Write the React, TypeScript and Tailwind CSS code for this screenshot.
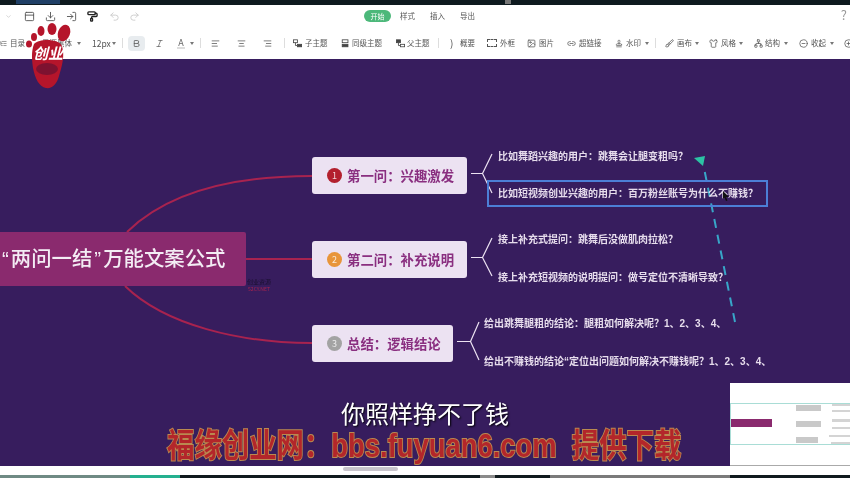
import React from "react";
import {
  AlignLeft, AlignCenter, AlignRight, Undo2, Redo2, Download, LogIn, Image as ImageIcon, Link2, Shirt, CircleMinus, CirclePlus, Network, Bold, Italic, ListTree, PaintRoller, PanelTop, ChevronDown, Stamp, Brush
} from "lucide-react";

const Caret = ({ ml = "ml-[4px]" }: { ml?: string }) => <span className={`h-0 w-0 shrink-0 border-x-[2px] border-t-[3px] border-x-transparent border-t-[#777] ${ml}`} />;
const Divider = ({ ml }: { ml: string }) => <span className={`h-[10px] w-px shrink-0 bg-[#ddd] ${ml}`} />;

const TopicIcon = ({ kind }: { kind: number }) => (
  <svg className="shrink-0" width="9" height="9" viewBox="0 0 11 10" fill="none" stroke="#444" strokeWidth="1">
    {kind === 0 && <><rect x="0.5" y="0.5" width="5" height="3.5" /><path d="M3 4v3.5h2" /><rect x="5.5" y="6" width="5" height="3" fill="#444" /></>}
    {kind === 1 && <><rect x="1.5" y="0.5" width="7" height="3.5" /><rect x="1.5" y="6" width="7" height="3" fill="#444" /></>}
    {kind === 2 && <><rect x="0.5" y="0.5" width="5" height="3.5" fill="#444" /><path d="M3 4v3.5h2" /><rect x="5.5" y="6" width="5" height="3" /></>}
  </svg>
);

const Label = ({ ml = "ml-[3px]", children }: { ml?: string; children: React.ReactNode }) => (
  <span className={`shrink-0 whitespace-nowrap text-[7.5px] leading-none text-[#555] ${ml}`}>{children}</span>
);

const icon9 = "h-[9px] w-[9px] shrink-0 text-[#555]";

const Leaf = ({ x, y, children }: { x: string; y: string; children: React.ReactNode }) => (
  <div className={`absolute whitespace-nowrap text-[10px] font-semibold leading-none text-[#e6dcec] [font-family:'Liberation_Sans','Noto_Sans_CJK_SC',sans-serif] ${x} ${y}`}>{children}</div>
);

const Topic = ({ pos, color, n, children }: { pos: string; color: string; n: number; children: React.ReactNode }) => (
  <div className={`absolute flex h-[37px] items-center rounded-[3px] bg-[#ece2f2] pl-[15px] ${pos}`}>
    <span className={`flex h-[15px] w-[15px] items-center justify-center rounded-full text-[9px] leading-none text-white/80 ${color}`}>{n}</span>
    <span className="ml-[5px] whitespace-nowrap text-[13.4px] font-bold leading-none text-[#8a2f80]">{children}</span>
  </div>
);

export default function App() {
  return (
    <div className="relative flex h-[478px] w-[850px] flex-col overflow-hidden bg-[#371d5e] blur-[0.4px] [font-family:'Noto_Sans_CJK_SC','Liberation_Sans',sans-serif]">
      <div className="flex h-[5px] shrink-0 bg-[#0e1a1f]">
        <span className="ml-[16px] h-[4px] w-[44px] bg-[#1f3f66]" />
        <span className="ml-[445px] h-[4px] w-[6px] bg-[#777]" />
      </div>

      <div className="flex h-[54px] shrink-0 flex-col bg-white">
        <div className="relative flex h-[23px] items-center pl-[5px]">
          <ChevronDown className="h-[7px] w-[7px] text-[#bbb]" />
          <PanelTop className="ml-[12px] h-[11px] w-[11px] text-[#555]" />
          <Download className="ml-[10px] h-[11px] w-[11px] text-[#555]" />
          <LogIn className="ml-[10px] h-[11px] w-[11px] text-[#555]" />
          <PaintRoller className="ml-[10px] h-[11px] w-[11px] text-[#222]" strokeWidth={3} />
          <Undo2 className="ml-[11px] h-[11px] w-[11px] text-[#ccc]" />
          <Redo2 className="ml-[9px] h-[11px] w-[11px] text-[#ccc]" />
          <div className="absolute left-[364px] top-[5px] flex items-center">
            <span className="flex h-[12px] w-[27px] items-center justify-center rounded-full bg-[#4cb87a] text-[7px] leading-none text-white">开始</span>
            <span className="ml-[9px] text-[7.5px] leading-none text-[#555]">样式</span>
            <span className="ml-[15px] text-[7.5px] leading-none text-[#555]">插入</span>
            <span className="ml-[15px] text-[7.5px] leading-none text-[#555]">导出</span>
          </div>
          <span className="absolute right-[3px] top-[3px] text-[13px] leading-none text-[#999]">?</span>
        </div>
        <div className="flex h-[31px] items-center pb-[1px]">
          <ListTree className="h-[9px] w-[7px] shrink-0 text-[#555]" />
          <Label>目录</Label>
          <Label ml="ml-[17px]">思源黑体</Label>
          <Caret ml="ml-[5px]" />
          <span className="ml-[11px] w-[16px] shrink-0 whitespace-nowrap text-[8.500px] leading-none text-[#555]">12px</span>
          <Caret />
          <Divider ml="ml-[6px]" />
          <span className="ml-[5px] flex h-[15px] w-[17px] shrink-0 items-center justify-center rounded-sm bg-[#e8ecef]">
            <Bold className="h-[9px] w-[9px] text-[#555]" />
          </span>
          <Italic className="ml-[10px] h-[9px] w-[9px] shrink-0 text-[#666]" />
          <span className="ml-[13px] w-[8px] shrink-0 border-b-2 border-[#ddd] text-center text-[9px] leading-none text-[#666]">A</span>
          <Caret ml="ml-[5px]" />
          <Divider ml="ml-[6px]" />
          <AlignLeft className={`ml-[10px] ${icon9}`} />
          <AlignCenter className={`ml-[17px] ${icon9}`} />
          <AlignRight className={`ml-[17px] ${icon9}`} />
          <Divider ml="ml-[12px]" />
          <span className="ml-[8px] flex shrink-0"><TopicIcon kind={0} /></span>
          <Label>子主题</Label>
          <span className="ml-[13.500px] flex shrink-0"><TopicIcon kind={1} /></span>
          <Label ml="ml-[2px]">同级主题</Label>
          <span className="ml-[14px] flex shrink-0"><TopicIcon kind={2} /></span>
          <Label ml="ml-[2px]">父主题</Label>
          <Divider ml="ml-[8.500px]" />
          <span className="ml-[11px] w-[5px] shrink-0 text-[10px] leading-none text-[#555]">)</span>
          <Label ml="ml-[5px]">概要</Label>
          <span className="ml-[12px] h-[8px] w-[10px] shrink-0 border border-dashed border-[#555]" />
          <Label>外框</Label>
          <ImageIcon className={`ml-[12px] ${icon9}`} />
          <Label>图片</Label>
          <Link2 className={`ml-[13px] ${icon9}`} />
          <Label>超链接</Label>
          <Stamp className="ml-[13.500px] h-[9px] w-[8px] shrink-0 text-[#555]" />
          <Label>水印</Label>
          <Caret />
          <Divider ml="ml-[6px]" />
          <Brush className={`ml-[9px] ${icon9}`} />
          <Label>画布</Label>
          <Caret ml="ml-[3px]" />
          <Shirt className={`ml-[10px] ${icon9}`} />
          <Label>风格</Label>
          <Caret ml="ml-[3px]" />
          <Network className={`ml-[11px] ${icon9}`} />
          <Label ml="ml-[2px]">结构</Label>
          <Caret />
          <CircleMinus className={`ml-[11px] ${icon9}`} />
          <Label>收起</Label>
          <Caret />
          <CirclePlus className={`ml-[10px] ${icon9}`} />
        </div>
      </div>

      <div className="relative flex-1">
        <div className="absolute left-0 top-[-59px] h-[478px] w-[850px]">
          <svg className="absolute left-0 top-0" width="850" height="478" fill="none">
            <path d="M127 232C170 190 240 176 312 176" stroke="#a8234f" strokeWidth="2" />
            <path d="M240 259H312" stroke="#a8234f" strokeWidth="2" />
            <path d="M125 286C165 325 240 343 312 343" stroke="#a8234f" strokeWidth="2" />
            <g stroke="#ece2f2" strokeWidth="1.2">
              <path d="M471 173.500H482.500M492 154L482.500 173.500L492 193" />
              <path d="M471 257.500H482.500M492 238L482.500 257.500L492 276" />
              <path d="M457 341.500H470.500M479 322L470.500 341.500L479 360" />
            </g>
            <path d="M735 322L704 168" stroke="#38a6c8" strokeWidth="2" strokeDasharray="9 7" />
            <path d="M694 158L705 156L703 166Z" fill="#2cc2a4" />
          </svg>

          <div className="absolute left-0 top-[232px] flex h-[54px] w-[246px] items-center rounded-r-[2px] bg-[#8a2a6e]">
            <span className="whitespace-nowrap text-[20.400px] font-medium leading-none text-[#f3ecf4] [font-family:'Liberation_Sans','Noto_Sans_CJK_SC',sans-serif]"><span className="px-[2px]">“</span>两问一结<span className="px-[2px]">”</span>万能文案公式</span>
          </div>

          <div className="absolute left-[243px] top-[278px] flex w-[32px] flex-col items-center">
            <div className="text-[6px] leading-[8px] text-[#1b1030]">创业资源</div>
            <div className="text-[5px] leading-[6px] text-[#a8234f]">52CY.NET</div>
          </div>

          <Topic pos="left-[312px] top-[157px] w-[155px]" color="bg-[#b3202e]" n={1}>第一问：兴趣激发</Topic>
          <Topic pos="left-[312px] top-[241px] w-[155px]" color="bg-[#e8953a]" n={2}>第二问：补充说明</Topic>
          <Topic pos="left-[312px] top-[325px] w-[141px]" color="bg-[#a3a3a3]" n={3}>总结：逻辑结论</Topic>

          <Leaf x="left-[498px]" y="top-[152px]">比如舞蹈兴趣的用户：跳舞会让腿变粗吗？</Leaf>
          <div className="absolute left-[487px] top-[180px] h-[27px] w-[281px] border-2 border-[#4c7fd6]" />
          <Leaf x="left-[498px]" y="top-[189px]">比如短视频创业兴趣的用户：百万粉丝账号为什么不赚钱？</Leaf>
          <Leaf x="left-[498px]" y="top-[235px]">接上补充式提问：跳舞后没做肌肉拉松？</Leaf>
          <Leaf x="left-[498px]" y="top-[273px]">接上补充短视频的说明提问：做号定位不清晰导致？</Leaf>
          <Leaf x="left-[484px]" y="top-[319px]">给出跳舞腿粗的结论：腿粗如何解决呢？1、2、3、4、</Leaf>
          <Leaf x="left-[484px]" y="top-[357px]">给出不赚钱的结论“定位出问题如何解决不赚钱呢？1、2、3、4、</Leaf>

          <svg className="absolute left-[722px] top-[191px]" width="8" height="10" viewBox="0 0 8 10">
            <path d="M1 0L7 6H4L5.500 9.500L4 10L2.500 6.500L1 8Z" fill="#111" />
          </svg>
        </div>

        {/* Minimap */}
        <div className="absolute bottom-0 right-0 h-[83px] w-[120px] border-b border-[#aaa] bg-white">
          <div className="absolute inset-x-0 top-[20px] h-[42px] border-y border-l border-[#a9ddd6]">
            <div className="absolute left-0 top-[15px] h-[8px] w-[41px] bg-[#8a2a6e]" />
            <div className="absolute left-[65px] top-[1px] h-[6px] w-[25px] bg-[#c9c9c9]" />
            <div className="absolute left-[65px] top-[17px] h-[6px] w-[25px] bg-[#c9c9c9]" />
            <div className="absolute left-[65px] top-[33px] h-[6px] w-[22px] bg-[#c9c9c9]" />
            <div className="absolute left-[101px] top-[0px] h-[2px] w-[19px] bg-[#d4d4d4]" />
            <div className="absolute left-[101px] top-[6px] h-[2px] w-[19px] bg-[#d4d4d4]" />
            <div className="absolute left-[101px] top-[15px] h-[3px] w-[19px] bg-[#d4d4d4]" />
            <div className="absolute left-[101px] top-[23px] h-[2px] w-[19px] bg-[#d4d4d4]" />
            <div className="absolute left-[98px] top-[31px] h-[2px] w-[22px] bg-[#d4d4d4]" />
            <div className="absolute left-[100px] top-[38px] h-[2px] w-[20px] bg-[#d4d4d4]" />
          </div>
        </div>

        {/* Subtitle and watermark overlay */}
        <div className="absolute inset-x-0 top-[342px] flex justify-center">
          <span className="text-[24px] leading-none text-white [text-shadow:1px_1px_2px_#000]">你照样挣不了钱</span>
        </div>
        <div className="absolute left-[167px] top-[370px] origin-left scale-x-[0.83] whitespace-pre text-[33px] font-bold leading-none text-[#b3262a] [-webkit-text-stroke:2px_#b98a50] [paint-order:stroke_fill] [font-family:'Liberation_Sans','Noto_Sans_CJK_SC',sans-serif]">福缘创业网：bbs.fuyuan6.com  提供下载</div>
      </div>

      <div className="relative h-[9px] shrink-0 bg-white">
        <span className="absolute left-[343px] top-[1px] h-[4px] w-[55px] rounded-sm bg-[#c8c4cc]" />
      </div>
      <div className="flex h-[3px] shrink-0 bg-[#101a1e]">
        <span className="h-full w-[130px] bg-[#6f8a84]" />
        <span className="h-full w-[50px] bg-[#25b08f]" />
        <span className="ml-[300px] h-full w-[15px] bg-[#8a8a8a]" />
        <span className="ml-[55px] h-full w-[180px] bg-[#7a7a7a]" />
      </div>

      {/* Watermark footprint logo */}
      <svg className="absolute left-[26px] top-[22px]" width="48" height="68" viewBox="0 0 48 68">
        <g fill="#b5152b">
          <ellipse cx="3" cy="22" rx="3" ry="3.500" />
          <ellipse cx="8" cy="15" rx="3" ry="4" />
          <ellipse cx="15" cy="9" rx="3.500" ry="5" />
          <ellipse cx="26" cy="7" rx="4.500" ry="6" />
          <ellipse cx="38" cy="11" rx="6" ry="8.500" transform="rotate(20 38 11)" />
          <path d="M8 22C14 16 33 17 36 24C39 34 36 44 33 54C31 62 26 67 20 66C13 65 9 56 7 46C6 38 5 30 8 22Z" />
        </g>
        <ellipse cx="21" cy="47" rx="11" ry="6" fill="#3a1038" opacity="0.45" />
        <text x="22" y="37" textAnchor="middle" fill="#fff" fontSize="15" fontWeight="700" fontStyle="italic">创业</text>
      </svg>
    </div>
  );
}
